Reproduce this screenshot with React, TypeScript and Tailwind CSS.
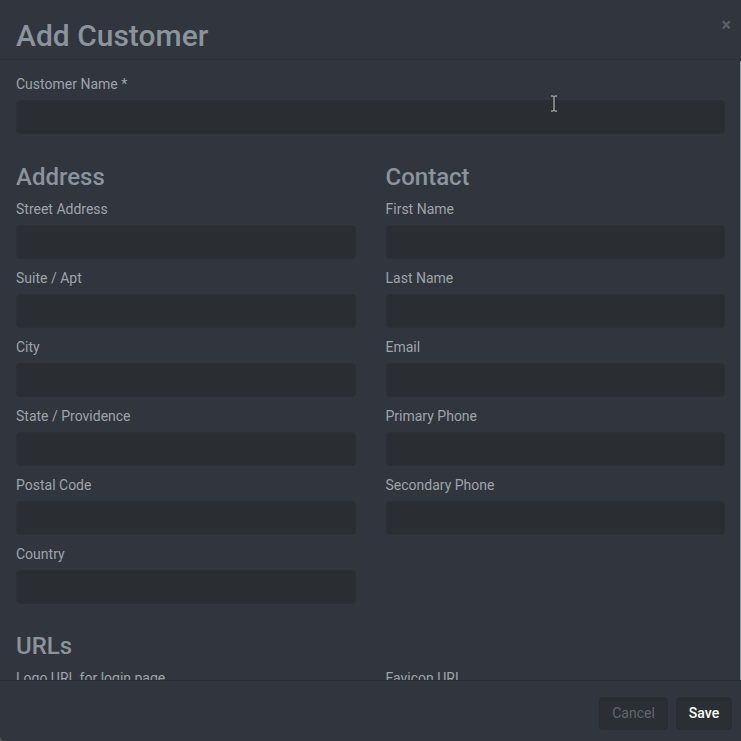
import React from 'react';

const Field = ({ label }: { label: string }) => (
  <div className="mb-[9px]">
    <label className="block text-[14px] leading-[20px] text-[#9ea4aa] mb-[6px]">{label}</label>
    <div className="h-[34px] rounded-[4px] bg-[#2a2e33] border border-[#2c3035]" />
  </div>
);

export default function App() {
  const address = ['Street Address', 'Suite / Apt', 'City', 'State / Providence', 'Postal Code', 'Country'];
  const contact = ['First Name', 'Last Name', 'Email', 'Primary Phone', 'Secondary Phone'];

  return (
    <div className="w-[741px] h-[741px] bg-[#55595e]" style={{ fontFamily: 'Roboto, "Liberation Sans", sans-serif' }}>
      <div className="relative w-[741px] h-[741px] bg-[#31353d] rounded-bl-[5px] flex flex-col overflow-hidden">
        {/* Header */}
        <div className="h-[60px] shrink-0 border-b border-[#2a2e34] px-4 flex items-center relative">
          <h2 className="text-[30px] font-medium text-[#8a949c] leading-none mt-[12px]">Add Customer</h2>
          <button className="absolute right-[10px] top-[16px] text-[#5a6068] text-[18px] font-bold leading-none">×</button>
        </div>

        {/* Body */}
        <div className="relative flex-1 overflow-hidden px-4 pt-[14px]">
          <div className="mb-[9px]">
            <label className="block text-[14px] leading-[20px] text-[#9ea4aa] mb-[6px]">Customer Name *</label>
            <div className="h-[34px] rounded-[4px] bg-[#2a2e33] border border-[#2c3035]" />
          </div>

          <div className="grid grid-cols-2 gap-x-[30px] mt-[29px]">
            <div>
              <h3 className="text-[24px] font-medium text-[#8a949c] leading-[29px] mb-[7px]">Address</h3>
              {address.map((a) => (
                <Field key={a} label={a} />
              ))}
            </div>
            <div>
              <h3 className="text-[24px] font-medium text-[#8a949c] leading-[29px] mb-[7px]">Contact</h3>
              {contact.map((c) => (
                <Field key={c} label={c} />
              ))}
            </div>
          </div>

          <h3 className="text-[24px] font-medium text-[#8a949c] leading-[29px] mt-[19px] mb-[7px]">URLs</h3>
          <div className="grid grid-cols-2 gap-x-[30px]">
            <Field label="Logo URL for login page" />
            <Field label="Favicon URL" />
          </div>

          {/* scrollbar */}
          <div className="absolute right-0 top-[1px] bottom-0 w-[1px] bg-[#8d949b]" />

          {/* text cursor */}
          <svg className="absolute left-[549px] top-[35px]" width="10" height="17" viewBox="0 0 10 17">
            <path d="M2 1h2.5M5.5 1H8M5 1v15M2 16h2.5M5.5 16H8" stroke="#000" strokeWidth="2.2" fill="none" />
            <path d="M2 1h2.5M5.5 1H8M5 1v15M2 16h2.5M5.5 16H8" stroke="#fff" strokeWidth="1" fill="none" />
          </svg>
        </div>

        {/* Footer */}
        <div className="h-[61px] shrink-0 border-t border-[#2a2e34] flex items-center justify-end gap-2 pr-[9px] pt-[4px]">
          <button className="h-[33px] w-[69px] rounded-[4px] bg-[#2b2f34] border border-[#2a2d32] text-[14px] text-[#5f666d]">Cancel</button>
          <button className="h-[33px] w-[56px] rounded-[4px] bg-[#2b2f34] border border-[#2a2d32] text-[14px] font-medium text-white">Save</button>
        </div>
      </div>
    </div>
  );
}
